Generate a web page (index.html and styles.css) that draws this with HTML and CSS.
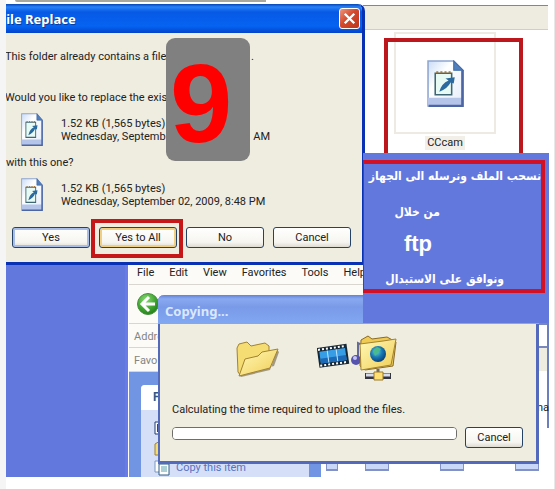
FILE: index.html
```html
<!DOCTYPE html>
<html lang="en">
<head>
<meta charset="utf-8">
<title>File Replace</title>
<link rel="stylesheet" href="styles.css">
</head>
<body>
<svg class="defs" aria-hidden="true">
  <defs>
    <linearGradient id="paper" x1="0" y1="0" x2="1" y2="1"><stop offset="0" stop-color="#c9dcf6"/><stop offset=".35" stop-color="#fff"/><stop offset="1" stop-color="#e4ecfa"/></linearGradient>
    <linearGradient id="gold" x1="0" y1="0" x2="1" y2="1"><stop offset="0" stop-color="#fff9b8"/><stop offset="1" stop-color="#f1cd55"/></linearGradient>
    <radialGradient id="globe" cx=".4" cy=".35" r=".7"><stop offset="0" stop-color="#68d5d8"/><stop offset=".5" stop-color="#1a7ab4"/><stop offset="1" stop-color="#063a78"/></radialGradient>
    <radialGradient id="green" cx=".4" cy=".3" r=".75"><stop offset="0" stop-color="#8cda77"/><stop offset=".6" stop-color="#3fa52f"/><stop offset="1" stop-color="#1f7a18"/></radialGradient>
    <symbol id="doc" viewBox="0 0 36 46" preserveAspectRatio="none">
      <path d="M1 1H26L35 10V45H1Z" fill="url(#paper)" stroke="#8ea5d0" stroke-width="1.5"/>
      <path d="M1 37H35V45H1Z" fill="#b5c5e9"/>
      <path d="M34.500 10V45H1.500" fill="none" stroke="#4c66a4" stroke-width="2.500"/>
      <path d="M26 1V10H35Z" fill="#4f7fbd" stroke="#416aa6"/>
      <path d="M8 13H24V34H8Z" fill="#e8faf4" stroke="#3e6674" stroke-width="1.500"/>
      <path d="M9 12H25" stroke="#a87b3d" stroke-width="2" stroke-dasharray="2 2"/>
      <path d="M12 31Q14 23 21 20L18 18L27 17L26 23L23 22Q20 28 12 31Z" fill="#2a6a9e"/>
    </symbol>
    <symbol id="folder" viewBox="0 0 44 37">
      <path d="M3 34L38 25L43 11L41 9L34 29L5 36Z" fill="#6c6244" opacity=".6"/>
      <path d="M1 7L3 3L11 1L15 5L29 2L33 5V12L18 17L5 35L2 31Z" fill="#f5dc73" stroke="#a28331"/>
      <path d="M3 35L9 18L22 15L26 11L42 8L34 27Z" fill="url(#gold)" stroke="#a28331"/>
    </symbol>
  </defs>
</svg>

<main class="desktop">
  <div class="edge"></div>
  <div class="top-shade"></div>
  <div class="wallpaper"></div>

  <section class="files">
    <div class="files-bar"></div>
    <div class="file-area">
      <figure class="file">
        <div class="thumb"><svg class="doc-large"><use href="#doc"/></svg></div>
        <figcaption>CCcam</figcaption>
      </figure>
      <div class="marker"></div>
    </div>
  </section>

  <section class="explorer">
    <nav class="menu">
      <a href="#file">File</a><a href="#edit">Edit</a><a href="#view">View</a><a href="#favorites">Favorites</a><a href="#tools">Tools</a><a href="#help">Help</a>
    </nav>
    <div class="toolbar">
      <button class="back" aria-label="Back"><svg viewBox="0 0 22 22"><circle cx="11" cy="11" r="10.500" fill="url(#green)" stroke="#48903d"/><path d="M12 4L5 11L12 18M6 11H18" fill="none" stroke="#fff" stroke-width="3"/></svg></button>
    </div>
    <div class="address">Addre</div>
    <div class="links">Favo</div>
    <div class="browser">
      <aside class="tasks">
        <div class="panel">
          <h2>F</h2>
          <ul>
            <li><svg viewBox="0 0 16 16"><path d="M1 2H15V14H1Z" fill="#fff" stroke="#223d70"/><path d="M3 4H13V12H3Z" fill="#234b87"/></svg></li>
            <li><svg viewBox="0 0 16 16"><path d="M1 15V4L6 1L14 4V15Z" fill="#f7dc72" stroke="#9d8132"/></svg></li>
            <li><svg viewBox="0 0 16 16"><path d="M1 1H10V12H1Z" fill="#fff" stroke="#7898bd"/><path d="M5 4H15V15H5Z" fill="#fff" stroke="#315d85"/><path d="M7 7H13M7 9H13M7 11H13" stroke="#57a2ad"/></svg><a href="#copy">Copy this item</a></li>
          </ul>
        </div>
      </aside>
      <div class="content"><i></i><i></i><i></i><i></i></div>
    </div>
    <div class="sliver"><span></span><b></b><p>na</p></div>
  </section>

  <section class="window replace">
    <header><h1>File Replace</h1><button class="close" aria-label="Close"><svg viewBox="0 0 20 20"><path d="M5 5L15 15M15 5L5 15" stroke="#fff" stroke-width="2.500"/></svg></button></header>
    <div class="replace-body">
      <p class="contains"><span>This folder already contains a file</span><span>.</span></p>
      <p class="question">Would you like to replace the exis</p>
      <div class="version"><svg><use href="#doc"/></svg><p>1.52 KB (1,565 bytes)<br><span class="when"><span>Wednesday, Septemb</span><span>AM</span></span></p></div>
      <p class="with">with this one?</p>
      <div class="version"><svg><use href="#doc"/></svg><p>1.52 KB (1,565 bytes)<br>Wednesday, September 02, 2009, 8:48 PM</p></div>
      <div class="actions"><button class="default">Yes</button><button class="hot">Yes to All</button><button>No</button><button>Cancel</button></div>
    </div>
    <div class="choice"></div>
  </section>
  <div class="step">9</div>

  <section class="window copying">
    <header><h1>Copying...</h1></header>
    <div class="copy-body">
      <div class="motion">
        <svg class="source"><use href="#folder"/></svg>
        <svg class="dest" viewBox="0 0 80 47">
          <g transform="rotate(-8 15 21)"><path d="M1 11H31V31H1Z" fill="#162735"/><path d="M3 15H29V27H3Z" fill="#379de5"/><path d="M3 22H29V27H3Z" fill="#1c69b8"/><path d="M11 15V27M20 15V27" stroke="#bfe8ff"/><path d="M2 13H30M2 29H30" stroke="#fff" stroke-width="2" stroke-dasharray="2 2"/></g>
          <path d="M41 22V8L47 11" fill="none" stroke="#646b9c" stroke-width="2"/><circle cx="39" cy="25" r="5" fill="#5553ad"/><circle cx="38" cy="23" r="2" fill="#c5c5f4"/>
          <path d="M44 5L51 1L55 4L70 2L79 7L76 31L48 35L43 31Z" fill="#efcb54" stroke="#8b6923"/>
          <path d="M43 9L66 6L79 4L74 30L44 35Z" fill="url(#gold)" stroke="#a28331"/>
          <circle cx="61" cy="19" r="8" fill="url(#globe)"/><path d="M56 16L60 12L64 14L61 18L58 21Z" fill="#48ba8b"/>
          <path d="M61 34V40" stroke="#6d6b62" stroke-width="3"/><path d="M48 41H74" stroke="#34343c" stroke-width="6"/><path d="M49 40H73" stroke="#d8dbea" stroke-width="3"/><path d="M57 37H66V45H57Z" fill="#ffdf72" stroke="#997a2b"/>
        </svg>
      </div>
      <label for="upload">Calculating the time required to upload the files.</label>
      <div class="progress-row"><progress id="upload" value="0" max="100"></progress><button>Cancel</button></div>
    </div>
  </section>

  <aside class="note" lang="ar" dir="rtl">
    <div class="note-frame">
      <p class="drag">نسحب الملف ونرسله الى الجهاز</p>
      <p class="via">من خلال</p>
      <p class="ftp">ftp</p>
      <p class="agree">ونوافق على الاستبدال</p>
    </div>
  </aside>
</main>
</body>
</html>
```
FILE: styles.css
```css
* { box-sizing: border-box; }
body { margin: 0; background: #fff; color: #222; font: 11px/14px Roboto, "Noto Sans", sans-serif; }
h1, h2, p, ul, figure { margin: 0; padding: 0; }
a { color: inherit; text-decoration: none; }
button { font: inherit; color: inherit; padding: 0; }
svg { display: block; }
.defs { position: absolute; width: 0; height: 0; }
.desktop { position: relative; min-height: 100vh; overflow: hidden; border-right: 1px solid #e8e8e8; }
.edge { position: absolute; inset: 0 auto 0 0; width: 6px; background: #f5f5f5; }
.top-shade { position: absolute; left: 15px; top: 0; width: 251px; height: 2px; background: #a9a89f; border-radius: 0 0 0 6px; }
.wallpaper { position: absolute; left: 6px; top: 262px; width: 123px; height: 215px; background: #6378dd; border-right: 4px solid #697be8; }

.files { position: absolute; left: 363px; top: 5px; width: 185px; border-top: 1px solid #85858b; }
.files-bar { height: 24px; background: #eeebe0; border-bottom: 1px solid #d1cec4; }
.file-area { position: relative; height: 123px; padding: 2px 31px; }
.file { text-align: center; width: 102px; }
.thumb { height: 102px; display: grid; place-items: center; border: 2px solid #eceae3; }
.doc-large { width: 37px; height: 47px; }
.file figcaption { display: inline-block; background: #f1efe8; padding: 0 2px; margin-top: 2px; }
.marker { position: absolute; left: 21px; top: 8px; width: 139px; height: 130px; border: 4px solid #bc171d; }

.explorer { position: absolute; left: 128px; top: 265px; width: 421px; height: 212px; display: flex; flex-direction: column; background: #fcfbf8; border-left: 1px solid #fff; }
.menu { display: flex; gap: 15px; height: 20px; padding: 1px 8px; border-bottom: 1px solid #d8d6cf; }
.toolbar { height: 39px; padding: 8px; border-bottom: 1px solid #d8d6cf; }
.back { width: 22px; height: 22px; border: 0; background: none; }
.address, .links { height: 24px; padding: 6px 5px; color: #858581; border-bottom: 1px solid #d8d6cf; }
.browser { flex: 1; min-height: 0; display: flex; overflow: hidden; }
.tasks { width: 192px; padding: 13px 12px 0; background: #7295e3; overflow: hidden; }
.panel { height: 100%; background: #d6dff8; border-radius: 4px 4px 0 0; overflow: hidden; }
.panel h2 { height: 25px; padding: 5px 12px; background: #fff; color: #325986; font-size: 12px; }
.panel ul { list-style: none; padding: 8px 13px; }
.panel li { height: 20px; display: flex; gap: 6px; align-items: center; color: #5674c2; }
.panel li svg { width: 16px; height: 16px; flex: none; }
.content { flex: 1; display: flex; align-items: flex-end; gap: 51px; background: #fff; padding: 0 9px 6px 5px; }
.content i { flex: none; width: 24px; height: 12px; background: #c9d7f8; border: 1px solid #8292c7; border-bottom-width: 2px; }
.content i:first-child { width: 12px; margin-right: -24px; }
.sliver { position: absolute; right: 0; top: 58px; width: 12px; height: 105px; background: #fff; border-right: 2px solid #6c7fbd; }
.sliver span { display: block; height: 25px; border: solid #7a87ba; border-width: 2px 0; }
.sliver b { display: block; height: 23px; background: #eeebe0; }
.sliver p { padding-top: 30px; text-align: right; }

.window { position: absolute; background: #efece0; }
.window header { display: flex; align-items: center; justify-content: space-between; color: #fff; }
.window h1 { font: bold 13px/18px "Noto Sans", "Open Sans", sans-serif; }
.replace { left: 6px; top: 4px; width: 359px; border: solid #0831b4; border-width: 0 3px 3px 0; border-radius: 0 7px 0 0; overflow: hidden; }
.replace header { height: 29px; padding: 0 2px 0 0; background: linear-gradient(#0646b5, #2981f8 3px, #0759e5 8px, #0564f2 22px, #0543c8); }
.replace h1 { margin-left: -7px; text-shadow: 1px 1px #073b9e; }
.close { width: 21px; height: 21px; background: linear-gradient(135deg, #ed967d, #d4482c 45%, #ba371d); border: 1px solid #fff; border-radius: 3px; }
.close svg { width: 19px; height: 19px; }
.replace-body { height: 229px; padding: 17px 5px 0; overflow: hidden; }
.contains { display: flex; justify-content: space-between; width: 249px; margin-left: -6px; }
.question { margin: 27px 0 0 -6px; }
.version { display: flex; height: 34px; gap: 18px; padding-left: 10px; margin-top: 8px; }
.version svg { width: 22px; height: 33px; }
.version p { line-height: 13px; padding-top: 4px; }
.when { display: flex; justify-content: space-between; width: 209px; }
.with { margin: 9px 0 0 -5px; }
.actions { display: flex; gap: 9px; margin-top: 15px; padding-left: 1px; }
.actions button, .progress-row button { width: 78px; height: 21px; background: linear-gradient(#fff, #f6f5ef 75%, #dedbd0); border: 1px solid #254267; border-radius: 3px; }
.actions .default { box-shadow: inset 0 0 0 2px #a8bee9; }
.actions .hot { box-shadow: inset 0 0 0 2px #f0cf83; }
.choice { position: absolute; left: 85px; top: 215px; width: 92px; height: 39px; border: 4px solid #c5161a; }
.step { position: absolute; left: 166px; top: 38px; width: 84px; height: 123px; padding: 0 0 0 4px; border-radius: 9px; background: #808080; color: #f00; font: bold 112px/131px "Liberation Sans", sans-serif; }

.copying { left: 158px; top: 295px; width: 381px; border: solid #536abc; border-width: 0 3px 3px 2px; border-radius: 6px 6px 0 0; }
.copying header { height: 29px; margin: 0 -3px 0 -2px; padding: 2px 7px 0; background: linear-gradient(#6482d6, #89a9f1 4px, #799ae8 12px, #82a8f2); border-radius: 6px 6px 0 0; }
.copying h1 { color: #dce8ff; }
.copy-body { padding: 11px 13px 13px 12px; }
.motion { display: flex; gap: 37px; padding-left: 64px; height: 55px; }
.source { width: 44px; height: 37px; margin-top: 6px; }
.dest { width: 80px; height: 47px; }
.copy-body label { display: block; margin: 13px 0 10px; }
.progress-row { display: flex; justify-content: space-between; align-items: flex-start; }
.progress-row button { width: 58px; }
.progress-row progress { width: 285px; height: 13px; appearance: none; border: 1px solid #706e6b; border-radius: 4px; background: #fff; overflow: hidden; }
progress::-webkit-progress-bar { background: #fff; }

.note { position: absolute; left: 363px; top: 153px; width: 186px; height: 170px; padding-top: 7px; background: #6378dd; color: #fff; }
.note-frame { width: 182px; height: 133px; margin-right: 4px; border: solid #d01126; border-width: 4px 4px 4px 1px; font: bold 12px/24px "DejaVu Sans Condensed", "DejaVu Sans", sans-serif; white-space: nowrap; }
.note-frame .via { margin: 12px 101px 0 0; }
.note-frame .ftp { margin: 8px 109px 0 0; font: bold 22px/24px "Liberation Sans", sans-serif; }
.note-frame .agree { margin: 11px 37px 0 0; }
```
